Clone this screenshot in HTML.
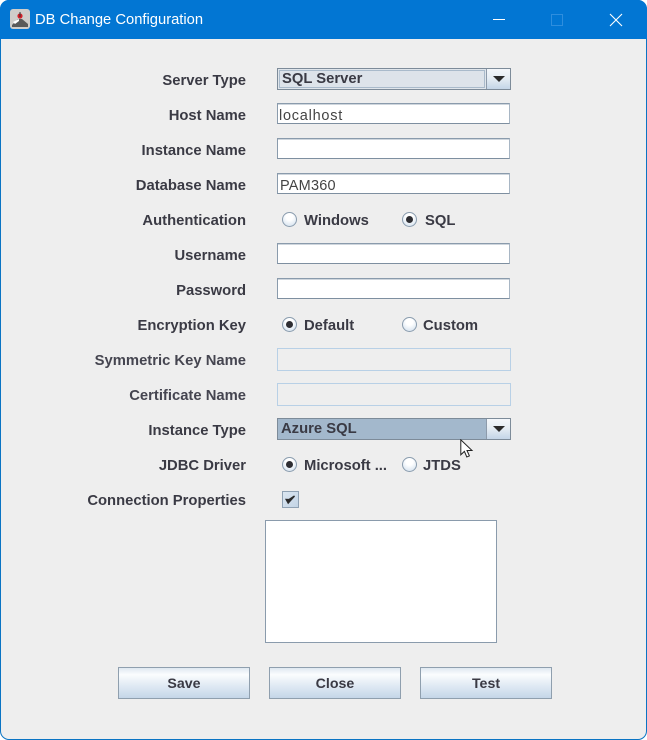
<!DOCTYPE html>
<html><head><meta charset="utf-8"><title>DB Change Configuration</title>
<style>
html,body{margin:0;padding:0;background:#fff}
#w{position:relative;width:647px;height:740px;overflow:hidden;background:#fff;font-family:"Liberation Sans",sans-serif}
#f{position:absolute;left:0;top:0;width:645px;height:738px;background:#eee;border:1px solid #0a74c4;border-radius:9px;overflow:hidden}
#t{position:absolute;left:0;top:0;width:647px;height:39px;background:#0276d3;border-radius:9px 9px 0 0}
.a{position:absolute}
.tt{position:absolute;left:35px;top:11px;font-size:14.75px;line-height:18px;color:#fff;white-space:nowrap}
.l{position:absolute;right:401px;font-weight:bold;font-size:14.8px;line-height:20px;color:#3a3a44;white-space:nowrap;text-align:right}
.r{position:absolute;font-weight:bold;font-size:14.8px;line-height:20px;color:#3a3a44;white-space:nowrap}
.tf{position:absolute;left:277px;width:231px;height:19px;background:#fff;border:1px solid #8a9bac;border-bottom-color:#7e8fa0;border-right-color:#a8b6c4;box-shadow:inset 0 1px 0 #cfd6dd;font-size:14.5px;line-height:24px;color:#444;text-indent:2px;letter-spacing:.2px;overflow:hidden}
.dis{position:absolute;left:277px;width:232px;height:21px;border:1px solid #b8d0e6;background:#eee}
.cb{position:absolute;left:277px;width:232px;height:20px;border:1px solid #7d8b99;background:#dfe5eb}
.btn{position:absolute;top:667px;width:130px;height:30px;border:1px solid #8f9fae;background:linear-gradient(#dfe8f1 0,#fbfdfe 22%,#e6eef6 50%,#c4d6e8 100%);font-weight:bold;font-size:14.2px;line-height:33px;text-align:center;color:#3a3a44}
.ar{position:absolute;left:486px;width:23px;height:20px;border-left:1px solid #8d9bab;background:linear-gradient(#f4f7fa,#e6edf4 45%,#c3d5e7)}
.ar:after{content:"";position:absolute;left:6px;top:7px;border-left:6px solid transparent;border-right:6px solid transparent;border-top:6px solid #2b2b2b}
.rd{position:absolute;width:13px;height:13px;border:1px solid #8a9cae;border-radius:50%;background:radial-gradient(circle at 50% 30%,#fff 30%,#d4e1ee 90%)}
.rd.on:after{content:"";position:absolute;left:3px;top:3px;width:7px;height:7px;border-radius:50%;background:#2e2e33}
</style></head><body>
<div id="w">
<div id="f"></div>
<div id="t"></div>
<svg class="a" style="left:10px;top:9px" width="20" height="20" viewBox="0 0 20 20"><rect width="20" height="20" rx="3" fill="#cfcdca"/><path d="M2 16l6-6 4 0 6 5v3H2z" fill="#5a5a5a"/><path d="M3 13l6-3v2l-4 3z" fill="#fff"/><circle cx="10" cy="7" r="2.6" fill="#d5202a"/><path d="M10 3v5" stroke="#333" stroke-width="1"/></svg>
<div class="tt">DB Change Configuration</div>
<div class="a" style="left:493px;top:19px;width:12px;height:1px;background:#fff"></div>
<div class="a" style="left:551px;top:14px;width:10px;height:10px;border:1px solid #2e8ede"></div>
<svg class="a" style="left:609px;top:13px" width="14" height="14" viewBox="0 0 14 14"><path d="M1 1l12 12M13 1L1 13" stroke="#fff" stroke-width="1.1" fill="none"/></svg>

<div class="l" style="top:71px">Server Type</div>
<div class="l" style="top:106px">Host Name</div>
<div class="l" style="top:141px">Instance Name</div>
<div class="l" style="top:176px">Database Name</div>
<div class="l" style="top:211px">Authentication</div>
<div class="l" style="top:246px">Username</div>
<div class="l" style="top:281px">Password</div>
<div class="l" style="top:316px">Encryption Key</div>
<div class="l" style="top:351px;color:#454550">Symmetric Key Name</div>
<div class="l" style="top:386px;color:#454550">Certificate Name</div>
<div class="l" style="top:421px">Instance Type</div>
<div class="l" style="top:456px">JDBC Driver</div>
<div class="l" style="top:491px">Connection Properties</div>

<div class="cb" style="top:68px"></div>
<div class="a" style="left:279px;top:70px;width:206px;height:18px;background:#dde3ea;border:1px solid #a9bacb;box-sizing:border-box"></div>
<div class="r" style="left:282px;top:69px">SQL Server</div>
<div class="ar" style="top:69px"></div>

<div class="tf" style="top:103px;letter-spacing:.75px;text-indent:1px">localhost</div>
<div class="tf" style="top:138px"></div>
<div class="tf" style="top:173px">PAM360</div>

<div class="rd" style="left:282px;top:212px"></div>
<div class="r" style="left:304px;top:211px">Windows</div>
<div class="rd on" style="left:402px;top:212px"></div>
<div class="r" style="left:425px;top:211px">SQL</div>

<div class="tf" style="top:243px"></div>
<div class="tf" style="top:278px"></div>

<div class="rd on" style="left:282px;top:317px"></div>
<div class="r" style="left:304px;top:316px">Default</div>
<div class="rd" style="left:402px;top:317px"></div>
<div class="r" style="left:423px;top:316px">Custom</div>

<div class="dis" style="top:348px"></div>
<div class="dis" style="top:383px"></div>

<div class="cb" style="top:418px;background:#a3b8cc"></div>
<div class="r" style="left:281px;top:419px">Azure SQL</div>
<div class="ar" style="top:419px"></div>

<div class="rd on" style="left:282px;top:457px"></div>
<div class="r" style="left:304px;top:456px">Microsoft ...</div>
<div class="rd" style="left:402px;top:457px"></div>
<div class="r" style="left:423px;top:456px">JTDS</div>

<div class="a" style="left:282px;top:491px;width:15px;height:15px;border:1px solid #8fa1b3;background:linear-gradient(135deg,#dbe6f0,#c3d4e5)"></div>
<svg class="a" style="left:284px;top:493px" width="13" height="13" viewBox="0 0 13 13"><path d="M2.2 6.5l2 3.6L10.5 3 5 6.6z" stroke="#2b2b2b" stroke-width="1.4" fill="#2b2b2b"/></svg>

<div class="a" style="left:265px;top:520px;width:230px;height:121px;background:#fff;border:1px solid #8a9bac"></div>

<div class="btn" style="left:118px">Save</div>
<div class="btn" style="left:269px">Close</div>
<div class="btn" style="left:420px">Test</div>

<svg class="a" style="left:460px;top:439px" width="14" height="20" viewBox="0 0 14 20"><path d="M.8.8v15l3.6-3.4 2.4 5.6 2.6-1.1-2.4-5.4h5z" fill="#fff" stroke="#222" stroke-width="1"/></svg>
</div>
</body></html>
